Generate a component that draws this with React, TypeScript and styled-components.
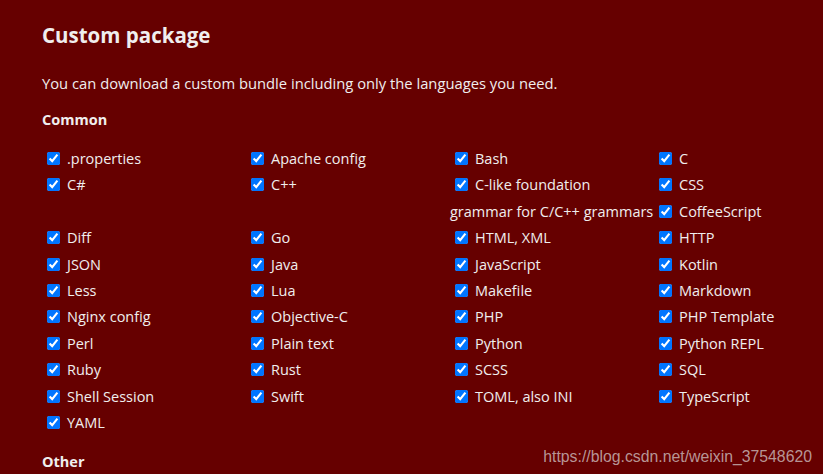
import styled, { createGlobalStyle } from "styled-components";

const GlobalStyle = createGlobalStyle`
  html, body {
    margin: 0;
    padding: 0;
    overflow: hidden;
    background: #660000;
  }
`;

const languages = [
  ".properties",
  "Apache config",
  "Bash",
  "C",
  "C#",
  "C++",
  "C-like foundation grammar for C/C++ grammars",
  "CSS",
  "CoffeeScript",
  "Diff",
  "Go",
  "HTML, XML",
  "HTTP",
  "JSON",
  "Java",
  "JavaScript",
  "Kotlin",
  "Less",
  "Lua",
  "Makefile",
  "Markdown",
  "Nginx config",
  "Objective-C",
  "PHP",
  "PHP Template",
  "Perl",
  "Plain text",
  "Python",
  "Python REPL",
  "Ruby",
  "Rust",
  "SCSS",
  "SQL",
  "Shell Session",
  "Swift",
  "TOML, also INI",
  "TypeScript",
  "YAML",
];

const App = () => {
  return (
    <Page>
      <GlobalStyle />
      <Section>
        <Title>Custom package</Title>
        <Intro>
          You can download a custom bundle including only the languages you
          need.
        </Intro>
        <GroupTitle>Common</GroupTitle>
        <LangList>
          {languages.map((lang) => (
            <LangItem key={lang}>
              <Check type="checkbox" defaultChecked />
              {lang}
            </LangItem>
          ))}
        </LangList>
        <GroupTitle $top={13}>Other</GroupTitle>
      </Section>
      <Watermark>https://blog.csdn.net/weixin_37548620</Watermark>
    </Page>
  );
};

export default App;

const Page = styled.div`
  position: relative;
  width: 823px;
  height: 474px;
  overflow: hidden;
  background: #660000;
  color: #f0eeee;
  font-family: "Open Sans", "Noto Sans", sans-serif;
`;

const Section = styled.div`
  width: 816px;
  padding: 20px 0 0 42px;
`;

const Title = styled.h2`
  margin: 0;
  font-size: 20.5px;
  line-height: 30px;
  font-weight: 700;
`;

const Intro = styled.p`
  margin: 20px 0 0;
  font-size: 14.75px;
  line-height: 26px;
`;

const GroupTitle = styled.h4<{ $top?: number }>`
  margin: ${(p) => p.$top ?? 11}px 0 0;
  font-size: 14.5px;
  line-height: 26px;
  font-weight: 700;
  clear: both;
`;

const LangList = styled.ul`
  list-style: none;
  margin: 13px 0 0;
  padding: 0;
  font-size: 14.5px;
  line-height: 26.4px;

  &::after {
    content: "";
    display: block;
    clear: both;
  }
`;

const LangItem = styled.li`
  float: left;
  width: 204px;
`;

const Check = styled.input`
  width: 13px;
  height: 13px;
  margin: 0 7px 0 5px;
  vertical-align: -1px;
  accent-color: #0075ff;
`;

const Watermark = styled.div`
  position: absolute;
  right: 11px;
  bottom: 8px;
  font-family: "Liberation Sans", Arial, sans-serif;
  font-size: 15.8px;
  color: rgba(205, 190, 190, 0.8);
`;
